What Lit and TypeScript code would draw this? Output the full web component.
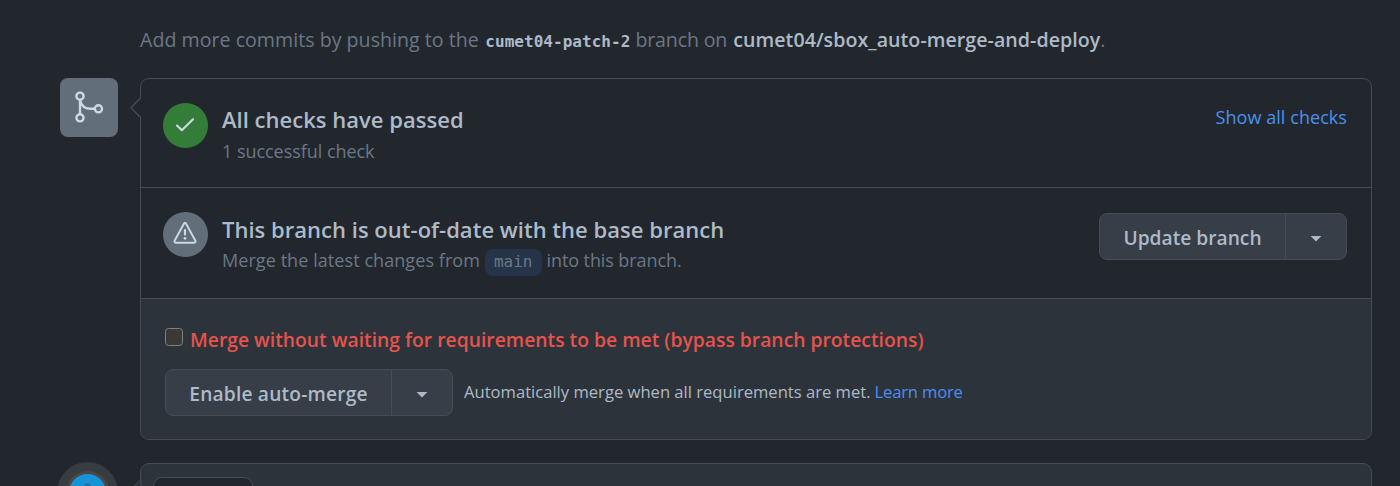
import { LitElement, html, css, svg } from "lit";

const caret = html`<svg class="caret" width="12" height="6" viewBox="0 0 12 6"><path d="M.6 0h10.8L6 5.6z" fill="currentColor"/></svg>`;

class SplitButton extends LitElement {
  static properties = { label: {} };
  label = "";
  static styles = css`
    :host { display: block; }
    .group { display: flex; height: 47px; box-sizing: border-box; border: 1px solid #444c56; border-radius: 8px; background: #373e47; overflow: hidden; }
    button { appearance: none; border: 0; margin: 0; padding: 0; background: none; color: #adbac7; font: 600 19.2px/30px "Open Sans", "Noto Sans", sans-serif; display: flex; align-items: center; justify-content: center; }
    .main { flex: 1; padding-top: 3px; letter-spacing: var(--tracking, 0px); }
    .toggle { width: 61px; box-sizing: border-box; border-left: 1px solid #444c56; padding: 5px 1px 0 0; }
    .caret { display: block; }
  `;
  render() {
    return html`<div class="group"><button class="main">${this.label}</button><button class="toggle" aria-label="More options">${caret}</button></div>`;
  }
}
customElements.define("split-button", SplitButton);

const mergeIcon = svg`<g fill="none" stroke="currentColor" stroke-width="1.05"><circle cx="4" cy="3.2" r="1.6"/><circle cx="4" cy="12.8" r="1.6"/><circle cx="12.2" cy="8.8" r="1.6"/><path d="M4 4.8v6.4M4 5c.5 2.4 2.4 3.8 5 3.8h1.6"/></g>`;

class AppRoot extends LitElement {
  static styles = css`
    :host { display: block; height: 486px; overflow: hidden; background: #22272e; color: #adbac7; font-family: "Open Sans", "Noto Sans", sans-serif; }
    * { box-sizing: border-box; }
    a { color: #4b8ff0; text-decoration: none; }
    .page { display: grid; grid-template-columns: 59px 1232px; column-gap: 21px; padding: 24px 28px 0 60px; white-space: nowrap; }
    .hint { grid-column: 2; height: 54px; font-size: 19.6px; line-height: 31px; color: #6b7785; display: flex; align-items: baseline; }
    .hint code { font: 700 16px "DejaVu Sans Mono", monospace; letter-spacing: .04px; color: #adbac7; margin: 0 5px 0 6.5px; }
    .first { letter-spacing: .02px; }
    .on { letter-spacing: -.15px; }
    .repo { color: #adbac7; font-weight: 600; letter-spacing: .05px; margin-left: 6px; }
    .badge { width: 58px; height: 59px; border-radius: 8px; background: #636e7b; color: #cdd9e5; padding: 11px 0 0 10.5px; }
    .badge svg { display: block; }
    .card { position: relative; height: 362px; border: 1px solid #444c56; border-radius: 9px; }
    .notch { position: absolute; left: -11px; top: 18px; }
    .row { display: flex; border-bottom: 1px solid #444c56; }
    .r1 { height: 109px; padding: 24px 24px 0 22px; }
    .r2 { height: 111px; padding: 24px 24px 0 22px; }
    .dot { flex: none; width: 44.5px; height: 44.5px; border-radius: 50%; display: grid; place-items: center; background: #636e7b; color: #cdd9e5; }
    .ok { background: #347d39; }
    .dot svg { display: block; }
    .info { flex: 1; margin-left: 14.5px; }
    h3 { margin: 2px 0 0; font-size: 22px; line-height: 30px; font-weight: 600; letter-spacing: .02px; }
    .r1 h3 { margin-top: 1px; }
    .sub { margin: 0; font-size: 18px; line-height: 32px; color: #6b7785; display: flex; align-items: baseline; }
    .r1 .sub { line-height: 34px; }
    .s1 { letter-spacing: -.04px; }
    .s2 { letter-spacing: .07px; }
    .s3 { letter-spacing: -.09px; margin-left: 5px; }
    .ref { font: 400 16px/26px "DejaVu Sans Mono", monospace; color: #6b7785; background: #263449; border-radius: 8px; padding: 0 9px; margin-left: 5px; height: 27px; }
    .show { font-size: 18px; line-height: 28px; letter-spacing: .06px; }
    .update { width: 248px; margin-top: 1px; }
    .foot { height: 140px; background: #2d333b; border-radius: 0 0 8px 8px; padding: 25px 24px 0; }
    .bypass { display: flex; height: 45px; color: #e5534b; font-weight: 600; font-size: 19.3px; line-height: 31px; letter-spacing: .01px; }
    .box { width: 18px; height: 18px; margin: 4px 7px 0 0; border: 1.5px solid #7f8177; border-radius: 3.5px; background: #3b3936; }
    .auto { display: flex; font-size: 16.6px; line-height: 46px; }
    .enable { width: 288px; margin-right: 11px; --tracking: .17px; }
    .learn { margin-left: 4px; letter-spacing: -.18px; }
    .avatar { width: 61px; height: 61px; margin: 22px 0 0 -3px; border-radius: 50%; background: #373b42; padding: 9px; }
    .ring { height: 43px; border-radius: 50%; background: #4a4847; padding: 3px; }
    .face { height: 37px; border-radius: 50%; background: #1793d8; display: flex; justify-content: center; padding-top: 9px; }
    .spot { width: 7px; height: 7px; border-radius: 50%; background: #2a74a5; }
    .comment { position: relative; height: 60px; margin-top: 23px; border: 1px solid #444c56; border-radius: 9px 9px 0 0; background: #2d333b; padding: 13px 0 0 12px; }
    .tab { width: 100px; height: 40px; border: 1px solid #444c56; border-radius: 9px 9px 0 0; background: #22272e; }
    .n2 { position: absolute; left: -11px; top: 15px; }
  `;
  render() {
    return html`<div class="page">
      <div class="hint"><span class="first">Add more commits by pushing to the</span><code>cumet04-patch-2</code><span class="on">branch on</span><span class="repo">cumet04/sbox_auto-merge-and-deploy</span><span>.</span></div>
      <div class="badge"><svg width="36" height="36" viewBox="0 0 16 16">${mergeIcon}</svg></div>
      <main class="card">
        <svg class="notch" width="12" height="22" viewBox="0 0 12 22"><path d="M11 .5L1 10.7 11 21z" fill="#22272e"/><path d="M11 .5L1 10.7 11 21" fill="none" stroke="#444c56" stroke-width="1.4"/></svg>
        <section class="row r1">
          <div class="dot ok"><svg width="24" height="24" viewBox="0 0 24 24"><path d="M4 12.5l4.8 4.8L20 6.2" fill="none" stroke="#cdd9e5" stroke-width="2.1" stroke-linecap="round" stroke-linejoin="round"/></svg></div>
          <div class="info"><h3>All checks have passed</h3><p class="sub s1">1 successful check</p></div>
          <a class="show">Show all checks</a>
        </section>
        <section class="row r2">
          <div class="dot"><svg width="24" height="24" viewBox="0 0 24 24"><path d="M10.9 1.7a1.25 1.25 0 0 1 2.2 0l9.3 17.1a1.25 1.25 0 0 1-1.1 1.9H2.7a1.25 1.25 0 0 1-1.1-1.9z" fill="none" stroke="currentColor" stroke-width="1.9" stroke-linejoin="round"/><path d="M12 8.2v4.2" stroke="currentColor" stroke-width="2.2" stroke-linecap="round"/><circle cx="12" cy="16.3" r="1.4" fill="currentColor"/></svg></div>
          <div class="info"><h3>This branch is out-of-date with the base branch</h3><p class="sub"><span class="s2">Merge the latest changes from</span><span class="ref">main</span><span class="s3">into this branch.</span></p></div>
          <split-button class="update" label="Update branch"></split-button>
        </section>
        <section class="foot">
          <label class="bypass"><span class="box"></span>Merge without waiting for requirements to be met (bypass branch protections)</label>
          <div class="auto"><split-button class="enable" label="Enable auto-merge"></split-button><span>Automatically merge when all requirements are met.</span><a class="learn">Learn more</a></div>
        </section>
      </main>
      <div class="avatar"><div class="ring"><div class="face"><div class="spot"></div></div></div></div>
      <section class="comment"><svg class="n2" width="12" height="22" viewBox="0 0 12 22"><path d="M11 0L1 10.7 11 21z" fill="#2d333b" stroke="#444c56"/></svg><div class="tab"></div></section>
    </div>`;
  }
}
customElements.define("app-root", AppRoot);
